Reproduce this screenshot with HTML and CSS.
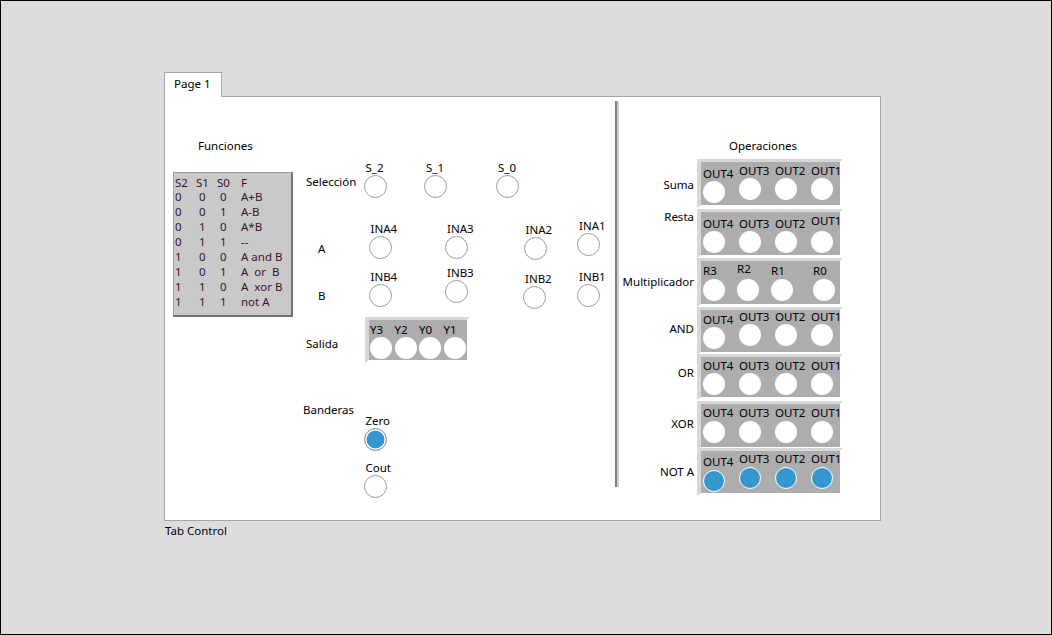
FILE: index.html
```html
<!DOCTYPE html>
<html lang="es">
<head>
<meta charset="utf-8">
<title>Panel frontal</title>
<link rel="stylesheet" href="styles.css">
</head>
<body>
<div class="window">
  <div class="tabctl">
    <div class="tabs"><div class="tab">Page 1</div></div>
    <div class="panel">
      <div class="lbl l-fun">Funciones</div>
      <div class="truth">
        <span>S2</span><span>S1</span><span>S0</span><span>F</span>
        <span>0</span><span class="d">0</span><span class="d">0</span><span>A+B</span>
        <span>0</span><span class="d">0</span><span class="d">1</span><span>A-B</span>
        <span>0</span><span class="d">1</span><span class="d">0</span><span>A*B</span>
        <span>0</span><span class="d">1</span><span class="d">1</span><span>--</span>
        <span>1</span><span class="d">0</span><span class="d">0</span><span>A and B</span>
        <span>1</span><span class="d">0</span><span class="d">1</span><span>A  or  B</span>
        <span>1</span><span class="d">1</span><span class="d">0</span><span>A  xor B</span>
        <span>1</span><span class="d">1</span><span class="d">1</span><span>not A</span>
      </div>

      <div class="lbl l-sel">Selección</div>
      <div class="ctl c-s2"><span class="cap">S_2</span><span class="led"></span></div>
      <div class="ctl c-s1"><span class="cap">S_1</span><span class="led"></span></div>
      <div class="ctl c-s0"><span class="cap">S_0</span><span class="led"></span></div>

      <div class="lbl l-a">A</div>
      <div class="ctl c-ina4"><span class="cap">INA4</span><span class="led"></span></div>
      <div class="ctl c-ina3"><span class="cap">INA3</span><span class="led"></span></div>
      <div class="ctl c-ina2"><span class="cap">INA2</span><span class="led"></span></div>
      <div class="ctl c-ina1"><span class="cap">INA1</span><span class="led"></span></div>

      <div class="lbl l-b">B</div>
      <div class="ctl c-inb4"><span class="cap">INB4</span><span class="led"></span></div>
      <div class="ctl c-inb3"><span class="cap">INB3</span><span class="led"></span></div>
      <div class="ctl c-inb2"><span class="cap">INB2</span><span class="led"></span></div>
      <div class="ctl c-inb1"><span class="cap">INB1</span><span class="led"></span></div>

      <div class="lbl l-sal">Salida</div>
      <div class="clu salida">
        <div class="it"><span class="cap">Y3</span><span class="dot"></span></div>
        <div class="it"><span class="cap">Y2</span><span class="dot"></span></div>
        <div class="it"><span class="cap">Y0</span><span class="dot"></span></div>
        <div class="it"><span class="cap">Y1</span><span class="dot"></span></div>
      </div>

      <div class="lbl l-ban">Banderas</div>
      <div class="ctl c-zero"><span class="cap">Zero</span><span class="led on"></span></div>
      <div class="ctl c-cout"><span class="cap">Cout</span><span class="led"></span></div>

      <div class="sep"></div>

      <div class="lbl l-ops">Operaciones</div>

      <div class="rl r-suma">Suma</div>
      <div class="clu ops k-suma">
        <div class="it dn3"><span class="cap">OUT4</span><span class="dot"></span></div>
        <div class="it"><span class="cap">OUT3</span><span class="dot"></span></div>
        <div class="it"><span class="cap">OUT2</span><span class="dot"></span></div>
        <div class="it"><span class="cap">OUT1</span><span class="dot"></span></div>
      </div>

      <div class="rl r-resta">Resta</div>
      <div class="clu ops k-resta">
        <div class="it"><span class="cap">OUT4</span><span class="dot"></span></div>
        <div class="it"><span class="cap">OUT3</span><span class="dot"></span></div>
        <div class="it"><span class="cap">OUT2</span><span class="dot"></span></div>
        <div class="it lup3"><span class="cap">OUT1</span><span class="dot"></span></div>
      </div>

      <div class="rl r-mult">Multiplicador</div>
      <div class="clu ops k-mult g1">
        <div class="it"><span class="cap">R3</span><span class="dot"></span></div>
        <div class="it lup2"><span class="cap">R2</span><span class="dot"></span></div>
        <div class="it"><span class="cap">R1</span><span class="dot"></span></div>
        <div class="it shift"><span class="cap">R0</span><span class="dot"></span></div>
      </div>

      <div class="rl r-and">AND</div>
      <div class="clu ops k-and">
        <div class="it dn3"><span class="cap">OUT4</span><span class="dot"></span></div>
        <div class="it"><span class="cap">OUT3</span><span class="dot"></span></div>
        <div class="it"><span class="cap">OUT2</span><span class="dot"></span></div>
        <div class="it"><span class="cap">OUT1</span><span class="dot"></span></div>
      </div>

      <div class="rl r-or">OR</div>
      <div class="clu ops k-or">
        <div class="it"><span class="cap">OUT4</span><span class="dot"></span></div>
        <div class="it"><span class="cap">OUT3</span><span class="dot"></span></div>
        <div class="it"><span class="cap">OUT2</span><span class="dot"></span></div>
        <div class="it"><span class="cap">OUT1</span><span class="dot"></span></div>
      </div>

      <div class="rl r-xor">XOR</div>
      <div class="clu ops k-xor g1">
        <div class="it"><span class="cap">OUT4</span><span class="dot"></span></div>
        <div class="it"><span class="cap">OUT3</span><span class="dot"></span></div>
        <div class="it"><span class="cap">OUT2</span><span class="dot"></span></div>
        <div class="it"><span class="cap">OUT1</span><span class="dot"></span></div>
      </div>

      <div class="rl r-not">NOT A</div>
      <div class="clu ops k-not g1">
        <div class="it dn3"><span class="cap">OUT4</span><span class="dot on"></span></div>
        <div class="it"><span class="cap">OUT3</span><span class="dot on"></span></div>
        <div class="it"><span class="cap">OUT2</span><span class="dot on"></span></div>
        <div class="it"><span class="cap">OUT1</span><span class="dot on"></span></div>
      </div>
    </div>
    <div class="caption">Tab Control</div>
  </div>
</div>
</body>
</html>
```

FILE: styles.css
```css
html, body {
  margin: 0;
  padding: 0;
}

body {
  font-family: "Noto Sans", "DejaVu Sans", sans-serif;
  font-size: 11.5px;
  line-height: 14px;
  color: #000;
}

.window {
  box-sizing: border-box;
  width: 1052px;
  height: 635px;
  border: 1px solid #000;
  background: #dddddd;
  overflow: hidden;
}

.tabctl {
  margin: 71px 0 0 163px;
  width: 717px;
}

.tabs {
  display: flex;
}

.tab {
  position: relative;
  z-index: 1;
  box-sizing: border-box;
  width: 58px;
  height: 25px;
  margin-bottom: -1px;
  padding: 3.5px 0 0 9px;
  border: 1px solid #a6a6a6;
  border-bottom: none;
  background: #fff;
}

.panel {
  position: relative;
  box-sizing: border-box;
  width: 717px;
  height: 425px;
  border: 1px solid #a6a6a6;
  background: #fff;
}

.caption {
  margin-top: 3px;
  padding-left: 1px;
}

/* free labels on the panel canvas */
.lbl {
  position: absolute;
  white-space: nowrap;
}
.l-fun { left: 33px; top: 42px; }
.l-sel { left: 141px; top: 78px; }
.l-a   { left: 153px; top: 145px; }
.l-b   { left: 153px; top: 192px; }
.l-sal { left: 141px; top: 240px; }
.l-ban { left: 138px; top: 306px; }
.l-ops { left: 564px; top: 42px; }

/* truth table */
.truth {
  position: absolute;
  left: 8px;
  top: 75px;
  box-sizing: border-box;
  width: 120px;
  height: 145px;
  padding: 2.5px 0 0 1px;
  background: #c9c9c9;
  border: 1px solid #9c9c9c;
  border-right: 2px solid #727272;
  border-bottom: 2px solid #727272;
  display: grid;
  grid-template-columns: 21px 21px 24px auto;
  grid-auto-rows: 14.9px;
  line-height: 14.9px;
  color: #3a1232;
  white-space: pre;
}
.truth .d {
  padding-left: 3px;
}

/* boolean controls: caption above a round LED */
.ctl {
  position: absolute;
  display: flex;
  flex-direction: column;
  align-items: flex-start;
}
.ctl .cap {
  padding-left: 2px;
  white-space: nowrap;
}
.led {
  box-sizing: border-box;
  width: 23px;
  height: 23px;
  border-radius: 50%;
  border: 1px solid #9b9b9b;
  background: #fff;
}
.led.on {
  background: #3597d0;
  box-shadow: inset 0 0 0 1.5px #fff;
  border-color: #a3a3a3;
}

.c-s2   { left: 198.5px; top: 64px; }
.c-s1   { left: 259px;   top: 64px; }
.c-s0   { left: 331px;   top: 64px; }
.c-ina4 { left: 203.5px; top: 125px; }
.c-ina3 { left: 280px;   top: 125px; }
.c-ina2 { left: 358.5px; top: 126px; }
.c-ina1 { left: 412px;   top: 122px; }
.c-inb4 { left: 203.5px; top: 173px; }
.c-inb3 { left: 280px;   top: 169px; }
.c-inb2 { left: 358px;   top: 175px; }
.c-inb1 { left: 412px;   top: 173px; }
.c-zero { left: 198.5px; top: 317px; }
.c-cout { left: 198.5px; top: 364px; }

/* separator line */
.sep {
  position: absolute;
  left: 450px;
  top: 4px;
  width: 2px;
  height: 386px;
  border-left: 2px solid #7e7e7e;
  background: #cfcfcf;
}

/* LED array clusters */
.clu {
  position: absolute;
  box-sizing: border-box;
  display: flex;
  align-items: flex-start;
  border-style: solid;
  border-width: 3px 3px 3px 4px;
  border-color: #d7d7d7 transparent transparent #d7d7d7;
  background: #adadad;
  background-clip: padding-box;
}
.it {
  display: flex;
  flex-direction: column;
  align-items: flex-start;
}
.it .cap {
  white-space: nowrap;
}
.dot {
  box-sizing: border-box;
  width: 22px;
  height: 22px;
  border-radius: 50%;
  background: #fff;
}
.dot.on {
  background: #3597d0;
  border: 1px solid #fff;
}

.salida {
  left: 200px;
  top: 220px;
  width: 105px;
  height: 46px;
  padding: 3px 0 0 1px;
  gap: 2.5px;
}
.salida .it {
  width: 22px;
}

.ops {
  left: 532px;
  width: 146px;
  padding-left: 2px;
  gap: 7px;
}
.ops .it {
  width: 29px;
}
.g1 .dot {
  margin-top: 1px;
}
.dn3 {
  margin-top: 3px;
}
.lup3 .cap {
  margin-top: -3px;
  margin-bottom: 3px;
}
.lup2 .cap {
  margin-top: -2px;
  margin-bottom: 2px;
}
.shift {
  margin-left: 8px;
}

.k-suma  { top: 62px;  height: 49px; padding-top: 2px; }
.k-resta { top: 112px; height: 49px; padding-top: 5px; }
.k-mult  { top: 161px; height: 49px; padding-top: 3px; }
.k-and   { top: 210px; height: 48px; padding-top: 0; }
.k-or    { top: 257px; height: 46px; padding-top: 1.5px; }
.k-xor   { top: 304px; height: 49px; padding-top: 2px; }
.k-not   { top: 351px; height: 48px; padding-top: 1px; }

/* right-aligned row captions */
.rl {
  position: absolute;
  right: 186px;
  white-space: nowrap;
}
.r-suma  { top: 81px; }
.r-resta { top: 113px; }
.r-mult  { top: 178px; }
.r-and   { top: 225px; }
.r-or    { top: 269px; }
.r-xor   { top: 320px; }
.r-not   { top: 368px; }
```
